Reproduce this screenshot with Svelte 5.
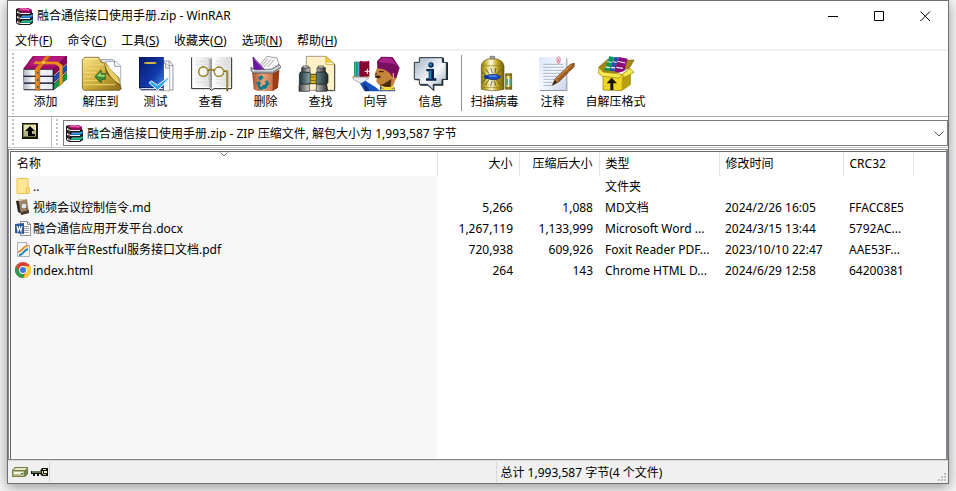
<script>
  const menus = [
    ['文件', 'F'], ['命令', 'C'], ['工具', 'S'], ['收藏夹', 'O'], ['选项', 'N'], ['帮助', 'H'],
  ];
  const files = [
    { icon: 'folder', name: '..', type: '文件夹' },
    { icon: 'md', name: '视频会议控制信令.md', size: '5,266', packed: '1,088', type: 'MD文档', date: '2024/2/26 16:05', crc: 'FFACC8E5' },
    { icon: 'word', name: '融合通信应用开发平台.docx', size: '1,267,119', packed: '1,133,999', type: 'Microsoft Word ...', date: '2024/3/15 13:44', crc: '5792AC...' },
    { icon: 'pdf', name: 'QTalk平台Restful服务接口文档.pdf', size: '720,938', packed: '609,926', type: 'Foxit Reader PDF...', date: '2023/10/10 22:47', crc: 'AAE53F...' },
    { icon: 'chrome', name: 'index.html', size: '264', packed: '143', type: 'Chrome HTML D...', date: '2024/6/29 12:58', crc: '64200381' },
  ];
</script>

{#snippet books()}
  <svg class="s17" viewBox="0 0 17 17" aria-hidden="true">
    <path d="M0 1 3 0h9l4 2v3h1v10l-3 2H3l-3-2z" fill="#16161a" />
    <path d="m1 1 3-1h8l4 2-2 1H5z" fill="#c41b83" />
    <path d="M5 3h9l2-1v2l-2 1H5z" fill="#8a0d5c" />
    <path d="M4 1h6l3 1" stroke="#ee8cc8" fill="none" />
    <path d="m1 3 4 2h9v1H5L1 5z" fill="#f2eef2" />
    <path d="M5 8h9l3-2v2l-2 2H5z" fill="#1673c6" />
    <path d="M6 8h8l2-1" stroke="#65b9ef" fill="none" />
    <path d="m1 8 4 2h9v1H5l-4-1z" fill="#f2f5f8" />
    <path d="M5 13h9l3-2v2l-2 2H5z" fill="#0f9c78" />
    <path d="M6 13h8l2-1" stroke="#5bd6b2" fill="none" />
    <path d="m1 13 4 2h9v1H5l-4-1z" fill="#eef7f2" />
    <path d="M3 1v15" stroke="#7b4a38" />
  </svg>
{/snippet}

{#snippet addIcon()}
  <svg class="tool" viewBox="60 165 153 117" aria-hidden="true">
    <defs>
      <linearGradient id="pages"><stop stop-color="#aeb5bd" /><stop offset=".35" stop-color="#fff" /><stop offset="1" stop-color="#e4e6ee" /></linearGradient>
    </defs>
    <path d="m70 207 29-39h102v70l-41 33H71z" fill="#26172a" />
    <path d="M70 209h88v18H72zM72 231h86v17H72zM70 251h88v17H72z" fill="url(#pages)" />
    <path d="M70 229h90M72 249h88" stroke="#192442" stroke-width="3" />
    <path d="m70 206 29-38h102l-41 40z" fill="#a00a68" />
    <path d="m84 197 22-28h91l-30 28z" fill="#b51a7c" />
    <path d="m162 208 39-38v18l-39 36z" fill="#8e0258" />
    <path d="m162 230 39-36v17l-39 35z" fill="#1450b8" />
    <path d="m162 252 39-35v19l-39 34z" fill="#0b9c3e" />
    <path d="m162 227 39-36M162 249l39-35" stroke="#ddcfe0" stroke-width="3" />
    <path d="m105 207 32-39h14l-31 39v64h-14z" fill="#e07913" stroke="#a65510" />
    <path d="m106 184 67 1 15 11v54l-10 9v-57l-11-9-67-1z" fill="#ed921f" stroke="#a65510" />
    <path d="M111 209v58M183 199v49" stroke="#ffb53c" stroke-width="2" />
    <circle cx="113" cy="218" r="3" fill="#315b75" /><circle cx="113" cy="240" r="3" fill="#315b75" /><circle cx="113" cy="261" r="3" fill="#315b75" /><circle cx="131" cy="187" r="4" fill="#fcd467" />
  </svg>
{/snippet}

{#snippet extractIcon()}
  <svg class="tool" viewBox="225 165 153 117" aria-hidden="true">
    <defs><linearGradient id="gold" x2="1" y2="1"><stop stop-color="#f8e68c" /><stop offset=".5" stop-color="#d2ae3c" /><stop offset="1" stop-color="#8a6a14" /></linearGradient></defs>
    <path d="M304 179h35l15 14v69h-50z" fill="#e7edf3" stroke="#67717f" stroke-width="2" />
    <path d="M317 185h32l13 13v64h-45z" fill="#fff" stroke="#8190a2" stroke-width="2" />
    <path d="M344 183v16h18" fill="none" stroke="#5e6b82" stroke-width="2" />
    <path d="m247 180 7-8h42l9 15 12 2 36 50 11 27-5 5H252l-5-6z" fill="url(#gold)" stroke="#5d4605" stroke-width="2" />
    <path d="M254 176h40" stroke="#fff3b8" stroke-width="3" />
    <path d="M250 194h62M250 206h44M250 218h38M250 230h32M250 242h42M250 254h96" stroke="#edd577" stroke-width="3" />
    <path d="m313 190 5 30 44 40-4-26z" fill="#6f5410" />
    <path d="M314 188q8 44 48 66l-7-20z" fill="#e9cd68" />
    <path d="m285 230 18-20 2 11h11v17h-11l-2 11z" fill="#3f9137" stroke="#1f4c1a" stroke-width="2" />
    <path d="m291 229 11-12v8h12v5z" fill="#a5dd7c" />
  </svg>
{/snippet}

{#snippet testIcon()}
  <svg class="tool" viewBox="390 165 153 117" aria-hidden="true">
    <defs><linearGradient id="blueBook" x2="1" y2="1"><stop stop-color="#08196a" /><stop offset=".6" stop-color="#1038a8" /><stop offset="1" stop-color="#3f86ee" /></linearGradient></defs>
    <path d="M492 183h17l10 13v74h-27z" fill="#f9fbff" stroke="#62656c" stroke-width="2" />
    <path d="M480 190h18l11 12v70h-29z" fill="#fff" stroke="#878b92" stroke-width="2" />
    <path d="M497 190v14h12M507 184v13h12" fill="none" stroke="#676b73" stroke-width="2" />
    <path d="M417 171h74v100h-68l-6-8z" fill="#06113d" />
    <path d="M419 171h71v91h-71z" fill="url(#blueBook)" />
    <path d="M421 266h68" stroke="#d2ddf6" stroke-width="4" />
    <path d="M433 189h36" stroke="#d6b524" stroke-width="5" />
    <path d="M440 189h22" stroke="#fff09b" stroke-width="2" />
    <path d="m447 248 8-5 17 13 32-24 4 2-35 37z" fill="#27a3f2" stroke="#fff" stroke-width="3" />
  </svg>
{/snippet}

{#snippet viewIcon()}
  <svg class="tool" viewBox="15 30 153 117" aria-hidden="true">
    <defs><linearGradient id="paper"><stop stop-color="#fff" /><stop offset=".4" stop-color="#e2e2e2" /><stop offset=".49" stop-color="#999" /><stop offset=".51" stop-color="#fff" /><stop offset="1" stop-color="#dadada" /></linearGradient></defs>
    <path d="M35 37v94h53l7 5 7-5h53V37" fill="#fff" stroke="#222" stroke-width="3" />
    <path d="M38 36h45l12 7 12-7h45v89h-47l-10 8-10-8H38z" fill="url(#paper)" />
    <path d="M46 49h34M46 58h34M46 101h34M46 111h34M107 49h35M107 58h35M107 103h28M107 113h28" stroke="#cfcfcf" stroke-width="2" stroke-dasharray="4 2" />
    <path d="M94 38v92" stroke="#555" stroke-width="2" stroke-dasharray="4 3" />
    <g fill="#fff8" stroke="#594707" stroke-width="4"><circle cx="70" cy="80" r="14" /><circle cx="117" cy="80" r="14" /></g>
    <g fill="none" stroke="#f2ce4b" stroke-width="2"><circle cx="70" cy="80" r="14" /><circle cx="117" cy="80" r="14" /></g>
    <path d="M84 77q9-7 19 0M132 78h8l2 6v55" fill="none" stroke="#5c480a" stroke-width="5" />
    <path d="M84 76q9-7 19 0M133 77h7l2 7v48" fill="none" stroke="#e7bf35" stroke-width="2" />
  </svg>
{/snippet}

{#snippet deleteIcon()}
  <svg class="tool" viewBox="180 30 153 117" aria-hidden="true">
    <defs><linearGradient id="bin"><stop stop-color="#a9502e" /><stop offset=".4" stop-color="#e9a37c" /><stop offset="1" stop-color="#b0542c" /></linearGradient></defs>
    <path d="m234 67 27-33 30 5 8 26-22 15-41 3z" fill="#f8f8f8" stroke="#777" stroke-width="2" />
    <path d="m244 64 20-23M253 65l20-22M263 66l20-22" stroke="#a2a2a2" stroke-width="3" />
    <path d="m219 36 3 41 34-1z" fill="#6c14a8" stroke="#3a0865" stroke-width="2" />
    <path d="m223 42 28 32" stroke="#c493e0" stroke-width="2" />
    <path d="m216 79 5 54 12 5h45l16-10 4-52-24 9z" fill="url(#bin)" />
    <path d="m278 86 20-12-5 54-15 10z" fill="#9a3a17" />
    <path d="M213 67v10l7 7h57l24-15v-7l-5-3-20 13-48 4z" fill="#aeb6ba" stroke="#303538" stroke-width="2" />
    <path d="M216 76h60l24-12" fill="none" stroke="#fff" stroke-width="2" />
    <path d="m234 99 10-9 8 9-5 1-4 7-7-5zM229 112l10-4 4 9-4 1 3 8h6v8h-10l-6-14zM262 106l7 12-5 1-5 12h-9l-1 4-5-9 6-8v4l6-4 2-6-5-2z" fill="#087d8b" />
  </svg>
{/snippet}

{#snippet findIcon()}
  <svg class="tool" viewBox="345 30 153 117" aria-hidden="true">
    <defs>
      <linearGradient id="barrel"><stop stop-color="#1c3134" /><stop offset=".4" stop-color="#8fadad" /><stop offset="1" stop-color="#1a2a2c" /></linearGradient>
      <linearGradient id="steel"><stop stop-color="#3a3a3a" /><stop offset=".45" stop-color="#fff" /><stop offset="1" stop-color="#2a2a2a" /></linearGradient>
    </defs>
    <path d="M379 34h59l26 23v79h-85z" fill="#fff0c5" stroke="#77735f" stroke-width="2" />
    <path d="M464 58v79h-24" fill="none" stroke="#444" stroke-width="3" />
    <path d="M438 34v24h25z" fill="#fff" stroke="#b98c00" stroke-width="2" /><path d="M437 34v18l19 2z" fill="#efc51c" />
    <path d="M387 88h24v28h-24z" fill="#e0b91c" stroke="#423300" stroke-width="3" />
    <path d="M365 68h25v14h-25zM411 68h25v14h-25z" fill="url(#steel)" stroke="#1c1c1c" stroke-width="2" />
    <path d="M369 63h16v6h-16zM415 63h16v6h-16z" fill="#ddd" stroke="#222" stroke-width="2" />
    <path d="m361 81 30 2v30l-8 5h-25V88zM409 82l29-1 6 8v24l-5 5h-27l-4-6z" fill="url(#barrel)" stroke="#132326" stroke-width="2" />
    <path d="M359 118h29v21h-31v-18zM410 118h30l3 18-3 3h-32z" fill="url(#steel)" stroke="#1c1c1c" stroke-width="2" />
    <path d="M393 96h12M393 106h12" stroke="#6f5900" stroke-width="3" />
  </svg>
{/snippet}

{#snippet wizardIcon()}
  <svg class="tool" viewBox="510 30 153 117" aria-hidden="true">
    <path d="M522 50h10v45h-10z" fill="#0b9362" /><path d="M532 50h9v45h-9z" fill="#2757a8" /><path d="M540 48h28v48h-28z" fill="#87052e" /><path d="M545 50h18" stroke="#dc5b7c" stroke-width="3" />
    <path d="M526 50v44M535 50v44" stroke="#8bd6cb" stroke-width="2" />
    <path d="M562 71v16M554 79h16" stroke="#fff" stroke-width="3" />
    <path d="M519 94q24 8 49 0" fill="none" stroke="#b89413" stroke-width="4" />
    <path d="m517 97 38-1 12 3-10 7-9 11-14-6-13-7z" fill="#e8eaf1" stroke="#8f939c" stroke-width="2" />
    <path d="m540 116 16-9 6 4 23 14 17 14h-48z" fill="#1a52bd" /><path d="m550 112 5 26h15z" fill="#0b2f80" />
    <path d="m594 62-10 25 7 5-2 18 15 15h34l13-31-15-21-20-12z" fill="#c4853a" />
    <path d="M585 93q12-5 18 3l-6 4-11-2z" fill="#3e210b" />
    <path d="M590 110q9 14 22 6l22-14-2 24-26-1z" fill="#4a2a0e" />
    <path d="M597 80h14M590 84l-5 8" stroke="#2c1606" stroke-width="3" />
    <path d="m591 49 13-14 34 1 21 32-10 32-13-5q-9-18-30-23l-14-2z" fill="#790f60" />
    <path d="m594 50 14-12 26 2 16 21-16-6-26-2z" fill="#a8248c" />
    <path d="M600 122q20 12 43 4l3 13h-46z" fill="#1b49a4" /><path d="M603 124q18 10 39 1M602 133h42" fill="none" stroke="#f4d838" stroke-width="5" />
    <path d="M640 84v18" stroke="#e6a23d" stroke-width="4" />
    <path d="m543 38 2 4M569 36l3 4M580 44l3 3M555 32l2 2M578 60l3 2" stroke="#c6c6c6" stroke-width="2" />
  </svg>
{/snippet}

{#snippet infoIcon()}
  <svg class="tool" viewBox="15 30 153 117" aria-hidden="true">
    <defs><linearGradient id="bubble" x2="1" y2="1"><stop stop-color="#9fb0c6" /><stop offset=".55" stop-color="#f7f9fb" /><stop offset="1" stop-color="#93a5b8" /></linearGradient></defs>
    <path d="M60 38h72v14h12v53h-14v17h-27v17l-20-17H61v-16H46V54h14z" fill="#16272e" />
    <path d="M58 38h69v14h12v51h-13v15h-26v17l-18-17H58v-15H43V52h15z" fill="url(#bubble)" stroke="#253541" stroke-width="3" />
    <circle cx="93" cy="60" r="8" fill="#062b53" />
    <path d="M79 72h23v28h7v7H78v-7h8V79h-7z" fill="#061f4e" /><path d="M88 76h6v26h-6z" fill="#1b86bf" />
    <circle cx="92" cy="59" r="4" fill="#1b86bf" />
  </svg>
{/snippet}

{#snippet virusIcon()}
  <svg class="tool" viewBox="207 30 153 117" aria-hidden="true">
    <defs><linearGradient id="can"><stop stop-color="#8a7a12" /><stop offset=".2" stop-color="#cdb93a" /><stop offset=".42" stop-color="#fffde4" /><stop offset=".7" stop-color="#c2a622" /><stop offset="1" stop-color="#6a5a08" /></linearGradient></defs>
    <path d="M270 34h14v9h-14z" fill="#aaa" stroke="#555" stroke-width="2" />
    <path d="M244 63q2-16 20-21h27q18 5 21 21v70q-34 9-68 0z" fill="url(#can)" stroke="#655810" stroke-width="2" />
    <path d="M245 62h66M245 128h66" stroke="#8b7a16" stroke-width="2" />
    <path d="m257 72 10 14M272 68l5 16M287 70l-2 14M300 76l-10 12M256 121l10-16M272 124l4-17M287 122l-4-15M301 118l-12-14M246 80l12 12M246 112l14-12" fill="none" stroke="#222c40" stroke-width="2" />
    <ellipse cx="280" cy="96" rx="21" ry="8" fill="#1c4cc0" stroke="#081a52" stroke-width="2" /><ellipse cx="258" cy="96" rx="7" ry="6" fill="#17388e" />
    <path d="M268 93h22" stroke="#7fb1ff" stroke-width="3" />
    <path d="M317 86h18v47h-18z" fill="url(#can)" stroke="#5b520f" stroke-width="2" /><path d="M316 90h20M316 129h20" stroke="#7c6210" stroke-width="4" /><path d="M318 102h16v18h-16z" fill="#5ba285" />
    <path d="M324 102h4v18h-4z" fill="#e0f3e8" />
  </svg>
{/snippet}

{#snippet commentIcon()}
  <svg class="tool" viewBox="381 30 153 117" aria-hidden="true">
    <defs><linearGradient id="note" x2="1" y2="1"><stop stop-color="#d5e4ff" /><stop offset=".5" stop-color="#f8faff" /><stop offset="1" stop-color="#c6d4ea" /></linearGradient></defs>
    <path d="M420 40h82v98h-82z" fill="#8f97a6" /><path d="M417 37h82v98h-82z" fill="url(#note)" />
    <path d="M430 58h59M430 67h62M430 76h59M430 85h56M430 94h46M430 103h38M430 112h28M430 121h25" stroke="#8796ae" stroke-width="2" />
    <path d="M471 37v15q4 7 9 0V38q-4-6-8 0M476 42v10" fill="none" stroke="#d84359" stroke-width="2" />
    <path d="m457 121 9-20 45-43 12-3-1 10-46 46z" fill="#a15d1d" stroke="#4b2a10" stroke-width="2" />
    <path d="m469 102 45-43" stroke="#eca04d" stroke-width="3" /><path d="m498 71 9 9M466 102l8 8" stroke="#d9a928" stroke-width="3" />
    <path d="m457 121 8-15 5 6z" fill="#231f1d" />
  </svg>
{/snippet}

{#snippet sfxIcon()}
  <svg class="tool" viewBox="570 30 153 117" aria-hidden="true">
    <path d="m596 67 26-23 63 2 17-1-14 24-48 18-31-8z" fill="#a5890f" stroke="#6b570a" stroke-width="2" />
    <path d="m613 76 15-42 14 2-13 42z" fill="#07975a" /><path d="m629 78 14-42 14 1-13 42z" fill="#2a4fb8" /><path d="m644 79 13-43 26 5-10 37-18 5z" fill="#8c0d77" />
    <path d="m622 50 13 2M638 50l12 2M652 49l24 5" stroke="#f4f4ff" stroke-width="3" /><path d="m617 66 13 2M633 67l12 2M649 67l20 3" stroke="#e6e6f5" stroke-width="4" />
    <path d="m609 82 57 7 25-18v48l-26 18-56-2z" fill="#ecd620" stroke="#8a760a" stroke-width="2" />
    <path d="m666 97 25-16v37l-26 18z" fill="#b89e10" />
    <path d="m596 67 13 14 57 7-9 11-50-5-13-10 3-8zM666 88l24-18 12 12-28 15z" fill="#f6e94e" stroke="#97830f" stroke-width="2" />
    <path d="m635 98 16 17h-11v20h-9v-20h-11z" fill="#161400" />
  </svg>
{/snippet}

{#snippet fileIcon(kind)}
  <svg class="s17" viewBox="0 0 17 17" aria-hidden="true">
    {#if kind === 'folder'}
      <path d="M2 .5h11v9h1v6H2z" fill="#ffe694" stroke="#e9c452" /><path d="M11.500 15.500V10h2.500v5.500z" fill="#fff0b5" stroke="#e5bd45" />
    {:else if kind === 'md'}
      <path d="m1 2 3-1 3 14-4-2z" fill="#2c2824" /><path d="m4 2 8-2 2 14-8 2z" fill="#a08468" /><path d="m1 2 3-2 7-1 1 1-8 2z" fill="#dccbab" />
      <path d="m6 13 8-2v3l-8 2z" fill="#4a3a2c" />
      <circle cx="9" cy="7" r="3" fill="#dde3e8" stroke="#8a7560" /><path d="m11 9 2 2" stroke="#5b4a3a" />
    {:else if kind === 'word'}
      <path d="M5.500 1.500h7l3 3v11h-10z" fill="#fff" stroke="#8a8e94" /><path d="M12.500 1.500v3h3" fill="none" stroke="#8a8e94" />
      <path d="M9 6.500h5M9 8.500h5M9 10.500h5M9 12.500h5" stroke="#a0a4aa" /><path d="m0 4 9-1v11l-9-1z" fill="#2b579a" />
      <path d="m2 6 1 5 1.500-4L6 11l1-5" fill="none" stroke="#fff" stroke-width="1.200" />
    {:else if kind === 'pdf'}
      <path d="M2.500 1.500h9l3 3v11h-12z" fill="#f2f4f5" stroke="#afb3b6" /><path d="M11.500 1.500v3h3" fill="#fff" stroke="#a4a8aa" />
      <path d="M3 11c5 0 4-6 10-6" fill="none" stroke="#f08a2c" stroke-width="2" /><path d="M4 14c5 0 4-5 9-6" fill="none" stroke="#1681c8" stroke-width="2" /><path d="M4 12c4 0 4-5 9-6" fill="none" stroke="#ffe9b8" />
    {:else}
      <circle cx="8" cy="8" r="8" fill="#df4033" /><path d="M1 4.200 4.800 10.800 8 12v4A8 8 0 0 1 1 4.200" fill="#279f50" /><path d="M8 4.300h7.100A8 8 0 0 1 8 16l3.300-6z" fill="#fdce35" />
      <circle cx="8" cy="8" r="3.900" fill="#fff" /><circle cx="8" cy="8" r="3" fill="#3478e5" />
    {/if}
  </svg>
{/snippet}

{#snippet tool(icon, label, extra = '')}
  <button class="tool-button {extra}">{@render icon()}<span>{label}</span></button>
{/snippet}

<main class="desktop">
  <section class="window" aria-label="WinRAR">
    <header class="title">
      {@render books()}
      <h1>融合通信接口使用手册.zip - WinRAR</h1>
      <div class="controls">
        <button aria-label="最小化"><svg viewBox="0 0 11 11"><path d="M0 5.500h10" /></svg></button>
        <button aria-label="最大化"><svg viewBox="0 0 11 11"><path d="M.5.5h9v9h-9z" /></svg></button>
        <button aria-label="关闭"><svg viewBox="0 0 11 11"><path d="m.5.500 9.500 9.500M10 .5.500 10" /></svg></button>
      </div>
    </header>
    <nav class="menu">
      {#each menus as [label, key]}
        <button>{label}(<u>{key}</u>)</button>
      {/each}
    </nav>
    <div class="toolbar">
      <i class="grip"></i>
      {@render tool(addIcon, '添加')}
      {@render tool(extractIcon, '解压到')}
      {@render tool(testIcon, '测试')}
      {@render tool(viewIcon, '查看')}
      {@render tool(deleteIcon, '删除')}
      {@render tool(findIcon, '查找')}
      {@render tool(wizardIcon, '向导')}
      {@render tool(infoIcon, '信息')}
      <i class="rule"></i>
      {@render tool(virusIcon, '扫描病毒', 'wide')}
      {@render tool(commentIcon, '注释', 'narrow')}
      {@render tool(sfxIcon, '自解压格式', 'wider')}
    </div>
    <div class="address">
      <i class="grip"></i>
      <button class="up" aria-label="上一级">
        <svg viewBox="0 0 16 16"><path d="M0 0h16v16H0z" fill="#17170c" /><path d="M1 1h13v13H1z" fill="#77764c" /><path d="M2 2h12v6H2z" fill="#e4e3ae" /><path d="M2 8h12v5H2z" fill="#b8b680" /><path d="m8 3 5 5h-3v3h3v2H6V8H3z" fill="#000" /></svg>
      </button>
      <i class="grip second"></i>
      <div class="combo">
        {@render books()}
        <select aria-label="地址"><option>融合通信接口使用手册.zip - ZIP 压缩文件, 解包大小为 1,993,587 字节</option></select>
        <svg class="chevron" viewBox="0 0 10 6" aria-hidden="true"><path d="m.5.500 4.500 4.500L9.500.5" /></svg>
      </div>
    </div>
    <div class="list">
      <table>
        <colgroup><col class="c-name" /><col class="c-size" /><col class="c-packed" /><col class="c-type" /><col class="c-date" /><col class="c-crc" /><col /></colgroup>
        <thead>
          <tr>
            <th class="sorted">名称<svg class="sort" viewBox="0 0 8 5" aria-hidden="true"><path d="m.5.500 3.500 3.500L7.500.5" /></svg></th>
            <th class="num">大小</th><th class="num">压缩后大小</th><th>类型</th><th>修改时间</th><th>CRC32</th><td></td>
          </tr>
        </thead>
        <tbody>
          {#each files as f}
            <tr>
              <td class="name"><div>{@render fileIcon(f.icon)}<span>{f.name}</span></div></td>
              <td class="num">{f.size ?? ''}</td><td class="num">{f.packed ?? ''}</td><td>{f.type}</td><td>{f.date ?? ''}</td><td>{f.crc ?? ''}</td><td></td>
            </tr>
          {/each}
        </tbody>
      </table>
    </div>
    <footer>
      <div class="state">
        <svg class="disk" viewBox="0 0 16 11" aria-hidden="true"><path d="m0 3 3-3h13v7l-3 3H0z" fill="#7b7d4a" /><path d="m1 3 3-2h11l-2 2z" fill="#e5e6c7" /><path d="M1 4h11v5H1z" fill="#b7b98b" /><path d="M2 5h9v2H2z" fill="#f4f4db" /><path d="M9 6h2v1H9z" fill="#118a85" /></svg>
        <svg class="key" viewBox="0 0 17 9" aria-hidden="true"><path d="M0 3h9l2-3h6v8h-6L9 6H8v2H6V6H4v2H2V6H0z" fill="#111" /><path d="M1 4h9" stroke="#bda" /><path d="M12 1h3v1h-3zM11 3h1v3h-1zM12 6h3v1h-3z" fill="#d8cf72" /><path d="M13 3h3v2h-3z" fill="#eee" /></svg>
      </div>
      <div class="selected"></div>
      <div class="total">
        <span>总计 1,993,587 字节(4 个文件)</span>
        <svg class="resize" viewBox="0 0 8 8" aria-hidden="true"><path d="M6 0h2v2H6zM3 3h2v2H3zM6 3h2v2H6zM0 6h2v2H0zM3 6h2v2H3zM6 6h2v2H6z" fill="#bfbfbf" /></svg>
      </div>
    </footer>
  </section>
</main>

<style>
  :global(body) { margin: 0; background: #f6f6f6; }
  .desktop {
    box-sizing: border-box; min-height: 100vh; padding: 0 7px 7px; display: flex; overflow: hidden;
    font: 12px/16px "Noto Sans", "Noto Sans CJK SC", sans-serif; color: #000;
  }
  .window {
    box-sizing: border-box; flex: 1; min-width: 0; display: flex; flex-direction: column;
    border: 1px solid #707070; background: #fff; box-shadow: 0 3px 12px rgba(0, 0, 0, .4);
  }
  button, select { font: inherit; color: inherit; background: none; border: 0; border-radius: 0; padding: 0; margin: 0; }
  svg { display: block; flex: none; }
  .s17 { width: 17px; height: 17px; }
  .title { display: flex; align-items: center; height: 30px; padding-left: 8px; }
  .title h1 { margin: 0 0 0 4px; font: inherit; flex: 1; }
  .controls { display: flex; }
  .controls button { width: 46px; height: 29px; display: grid; place-items: center; }
  .controls svg { width: 11px; height: 11px; fill: none; stroke: #000; }
  .menu { display: flex; gap: 1px; height: 18px; border-bottom: 2px solid #f0f0f0; }
  .menu button { padding: 1px 7px 0; line-height: 18px; }
  .menu u { text-underline-offset: 1px; }
  .toolbar { display: flex; height: 65px; border-bottom: 1px solid #a8a8a8; }
  .grip { flex: none; width: 2px; margin: 2px 4px; background: repeating-linear-gradient(#c4c4c4 0 2px, transparent 2px 4px); }
  .tool-button { width: 55px; flex: none; padding-top: 4px; display: flex; flex-direction: column; align-items: center; white-space: nowrap; }
  .tool-button.narrow { width: 53px; }
  .tool-button.wide { width: 63px; }
  .tool-button.wider { width: 73px; }
  .tool { width: 51px; height: 39px; }
  .rule { width: 1px; margin: 4px 1px 5px 3px; background: #909090; }
  .address { display: flex; height: 30px; border-bottom: 1px solid #c4c4c4; }
  .up { width: 34px; display: flex; align-items: center; padding: 0 0 3px 4px; border-right: 1px solid #b8b8b8; }
  .up svg { width: 16px; height: 16px; }
  .grip.second { margin: 2px 5px 2px 4px; }
  .combo { flex: 1; min-width: 0; display: flex; align-items: center; height: 24px; margin-top: 3px; border: 1px solid #7a7a7a; position: relative; }
  .combo .s17 { margin-left: 2px; }
  select { appearance: none; flex: 1; min-width: 0; height: 24px; padding: 2px 0 0 4px; }
  .chevron { position: absolute; right: 3px; top: 10px; width: 10px; height: 6px; fill: none; stroke: #555; pointer-events: none; }
  .list {
    flex: 1; margin-top: 1px; padding: 2px;
    border: 1px solid #828790; border-width: 1px 2px 1px 1px;
    background: linear-gradient(#696969, #696969) 1px 1px / 100% 1px no-repeat,
      linear-gradient(#696969, #696969) 1px 1px / 1px 100% no-repeat,
      linear-gradient(#f7f7f7, #f7f7f7) 2px 26px / 426px 100% no-repeat, #fff;
  }
  table { width: 100%; border-collapse: collapse; table-layout: fixed; white-space: nowrap; }
  .c-name { width: 426px; }
  .c-size { width: 82px; }
  .c-packed { width: 80px; }
  .c-type { width: 120px; }
  .c-date { width: 124px; }
  .c-crc { width: 70px; }
  th, td { padding: 0 6px; text-align: left; font-weight: 400; overflow: hidden; height: 21px; }
  thead th, thead td { height: 24px; background: #fff; }
  th { border-right: 1px solid #e2e2e2; }
  .num { text-align: right; }
  .sorted { position: relative; }
  .sort { position: absolute; left: calc(50% - 4px); top: 0; width: 8px; height: 5px; fill: none; stroke: #777; }
  .name { padding: 0 4px; }
  .name div { display: flex; align-items: center; gap: 1px; }
  footer { display: flex; align-items: center; height: 22px; background: #f0f0f0; border-top: 1px solid #d7d7d7; }
  .state, .selected { align-self: stretch; margin: 1px 0; border-right: 1px solid #d7d7d7; }
  .state { display: flex; align-items: center; gap: 3px; width: 37px; padding-left: 4px; }
  .disk { width: 16px; height: 11px; }
  .key { width: 17px; height: 9px; }
  .selected, .total { flex: 1 1 0; box-sizing: border-box; }
  .total { display: flex; justify-content: space-between; padding: 2px 2px 0 4px; }
  .resize { width: 8px; height: 8px; align-self: flex-end; }
</style>
